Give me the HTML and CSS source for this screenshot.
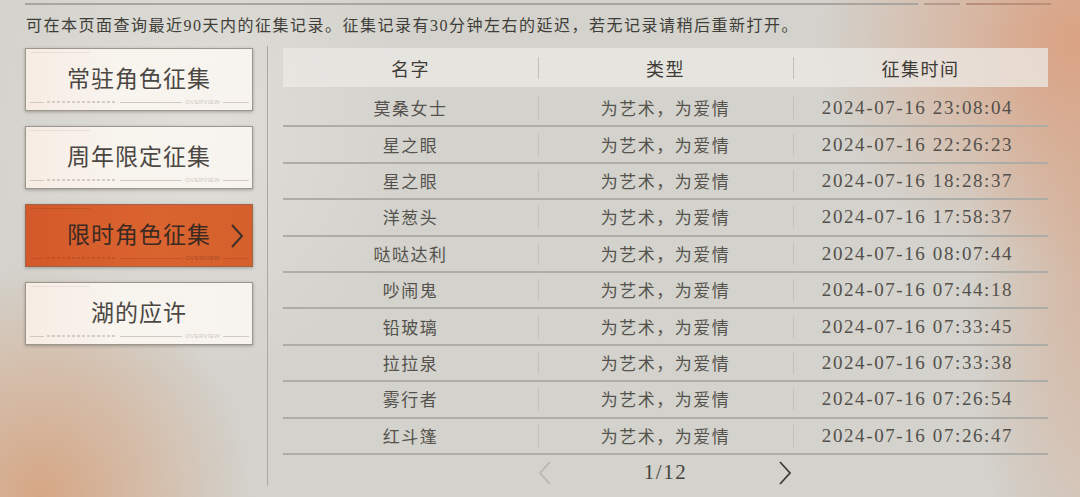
FILE: index.html
```html
<!DOCTYPE html>
<html lang="zh-CN">
<head>
<meta charset="utf-8">
<title>征集记录</title>
<link rel="stylesheet" href="styles.css">
</head>
<body>
<div class="page">
  <div class="topbar">
    <span class="tl tl-main"></span>
    <span class="tl tl-s1"></span>
    <span class="tl tl-s2"></span>
  </div>
  <p class="notice">可在本页面查询最近90天内的征集记录。征集记录有30分钟左右的延迟，若无记录请稍后重新打开。</p>
  <div class="main">
    <nav class="side">
      <div class="card">
        <span class="card-top"></span>
        <span class="card-label">常驻角色征集</span>
        <span class="deco"><i class="dl short"></i><i class="dots"></i><i class="dl long"></i><b>OVERVIEW</b><i class="dl end"></i></span>
      </div>
      <div class="card">
        <span class="card-top"></span>
        <span class="card-label">周年限定征集</span>
        <span class="deco"><i class="dl short"></i><i class="dots"></i><i class="dl long"></i><b>OVERVIEW</b><i class="dl end"></i></span>
      </div>
      <div class="card active">
        <span class="card-top"></span>
        <span class="card-label">限时角色征集</span>
        <span class="deco"><i class="dl short"></i><i class="dots"></i><i class="dl long"></i><b>OVERVIEW</b><i class="dl end"></i></span>
        <svg class="chev" viewBox="0 0 14 26" width="14" height="26"><path d="M2 2 L12 13 L2 24" fill="none" stroke="#3d3029" stroke-width="2"/></svg>
      </div>
      <div class="card">
        <span class="card-top"></span>
        <span class="card-label">湖的应许</span>
        <span class="deco"><i class="dl short"></i><i class="dots"></i><i class="dl long"></i><b>OVERVIEW</b><i class="dl end"></i></span>
      </div>
    </nav>
    <div class="vdiv"></div>
    <section class="records">
      <div class="thead">
        <div class="th">名字</div>
        <div class="th">类型</div>
        <div class="th">征集时间</div>
      </div>
      <div class="rows">
        <div class="row"><span>莫桑女士</span><span>为艺术，为爱情</span><span class="t">2024-07-16 23:08:04</span></div>
        <div class="row"><span>星之眼</span><span>为艺术，为爱情</span><span class="t">2024-07-16 22:26:23</span></div>
        <div class="row"><span>星之眼</span><span>为艺术，为爱情</span><span class="t">2024-07-16 18:28:37</span></div>
        <div class="row"><span>洋葱头</span><span>为艺术，为爱情</span><span class="t">2024-07-16 17:58:37</span></div>
        <div class="row"><span>哒哒达利</span><span>为艺术，为爱情</span><span class="t">2024-07-16 08:07:44</span></div>
        <div class="row"><span>吵闹鬼</span><span>为艺术，为爱情</span><span class="t">2024-07-16 07:44:18</span></div>
        <div class="row"><span>铅玻璃</span><span>为艺术，为爱情</span><span class="t">2024-07-16 07:33:45</span></div>
        <div class="row"><span>拉拉泉</span><span>为艺术，为爱情</span><span class="t">2024-07-16 07:33:38</span></div>
        <div class="row"><span>雾行者</span><span>为艺术，为爱情</span><span class="t">2024-07-16 07:26:54</span></div>
        <div class="row"><span>红斗篷</span><span>为艺术，为爱情</span><span class="t">2024-07-16 07:26:47</span></div>
      </div>
      <div class="pager">
        <svg class="pg prev" viewBox="0 0 14 26" width="14" height="26"><path d="M12 2 L2 13 L12 24" fill="none" stroke="#b9b6b0" stroke-width="1.8"/></svg>
        <span class="pnum">1/12</span>
        <svg class="pg next" viewBox="0 0 14 26" width="14" height="26"><path d="M2 2 L12 13 L2 24" fill="none" stroke="#3f3c38" stroke-width="1.8"/></svg>
      </div>
    </section>
  </div>
</div>
</body>
</html>
```

FILE: styles.css
```css
html, body {
  margin: 0;
  padding: 0;
}
body {
  width: 1080px;
  height: 497px;
  overflow: hidden;
  font-family: "Liberation Serif", "Noto Sans CJK SC", serif;
  color: #55524d;
}
.page {
  width: 1080px;
  height: 497px;
  box-sizing: border-box;
  background:
    radial-gradient(ellipse 260px 230px at 1080px 40px, rgba(218,160,128,0.95), rgba(218,160,128,0) 100%),
    radial-gradient(ellipse 120px 420px at 1090px 250px, rgba(214,168,140,0.7), rgba(214,168,140,0) 100%),
    radial-gradient(ellipse 210px 230px at 40px 497px, rgba(214,164,128,0.95), rgba(214,164,128,0) 100%),
    radial-gradient(ellipse 220px 260px at 200px 130px, rgba(236,234,228,0.5), rgba(236,234,228,0) 100%),
    #d3d2cc;
  display: flex;
  flex-direction: column;
}
.topbar {
  display: flex;
  gap: 6px;
  height: 2px;
  margin: 3px 0 0 25px;
}
.tl {
  display: block;
  height: 2px;
  background: #a9a59e;
}
.tl-main { width: 893px; }
.tl-s1 { width: 36px; background: #b49a8c; }
.tl-s2 { width: 85px; background: #ba8f7a; }
.notice {
  margin: 11px 0 0 26px;
  height: 20px;
  line-height: 20px;
  font-size: 16px;
  letter-spacing: 1.5px;
  color: #413e3a;
  white-space: nowrap;
}
.main {
  display: flex;
  margin-top: 10px;
  flex: 1;
}
.side {
  width: 228px;
  margin-left: 25px;
  padding-top: 2px;
  display: flex;
  flex-direction: column;
  gap: 15px;
}
.card {
  position: relative;
  height: 63px;
  box-sizing: border-box;
  border: 1px solid #9b968e;
  box-shadow: 0 1px 3px rgba(60,50,40,0.35);
  background: linear-gradient(90deg, #f7ece4 0%, #f8f4ee 40%, #f7f4ef 100%);
  display: flex;
  flex-direction: column;
  align-items: stretch;
}
.card-top {
  display: block;
  height: 1px;
  width: 60px;
  margin: 3px 0 0 4px;
  background: rgba(160,150,140,0.18);
}
.card-label {
  flex: 1;
  display: flex;
  align-items: center;
  justify-content: center;
  font-family: "Noto Sans CJK SC", sans-serif;
  font-size: 23px;
  letter-spacing: 1px;
  color: #4b4743;
  padding-top: 2px;
}
.deco {
  display: flex;
  align-items: center;
  height: 6px;
  margin: 0 3px 5px 4px;
  gap: 3px;
}
.deco i {
  display: block;
  height: 1px;
  background: #d0c9c1;
}
.deco .short { width: 14px; }
.deco .dots {
  width: 70px;
  height: 2px;
  background: repeating-linear-gradient(90deg, #d6ccc3 0 3px, transparent 3px 5px);
}
.deco .long { flex: 1; }
.deco .end { width: 26px; }
.deco b {
  font-family: "Liberation Sans", sans-serif;
  font-weight: normal;
  font-size: 6px;
  letter-spacing: 0.3px;
  color: #cfc8c0;
}
.card.active {
  background: linear-gradient(90deg, #d4592a 0%, #da6430 60%, #d6602c 100%);
  border-color: #a0644a;
}
.card.active .card-label {
  color: #3a2a22;
}
.card.active .card-top { background: rgba(120,50,20,0.2); }
.card.active .deco i { background: rgba(170,70,30,0.45); }
.card.active .deco .dots { background: repeating-linear-gradient(90deg, rgba(170,70,30,0.45) 0 3px, transparent 3px 5px); }
.card.active .deco b { color: rgba(160,70,35,0.9); }
.chev {
  position: absolute;
  right: 8px;
  top: 18px;
}
.vdiv {
  width: 1px;
  margin-left: 14px;
  margin-right: 15px;
  height: 440px;
  background: #aaa8a2;
}
.records {
  width: 765px;
  display: flex;
  flex-direction: column;
  padding-top: 2px;
}
.thead {
  display: grid;
  grid-template-columns: repeat(3, 1fr);
  height: 39px;
  background: rgba(236,234,229,0.75);
  align-items: center;
}
.th {
  text-align: center;
  font-family: "Noto Sans CJK SC", sans-serif;
  font-size: 18px;
  letter-spacing: 1.5px;
  color: #3e3b37;
  position: relative;
}
.th + .th::before, .row span + span::before {
  content: "";
  position: absolute;
  left: 0;
  top: 50%;
  width: 1px;
  height: 22px;
  margin-top: -11px;
  background: #c2c0ba;
}
.rows {
  display: flex;
  flex-direction: column;
  margin-top: 4px;
}
.row {
  display: grid;
  grid-template-columns: repeat(3, 1fr);
  height: 36.4px;
  box-sizing: border-box;
  border-bottom: 2px solid #aeaca6;
  align-items: center;
}
.row span {
  position: relative;
  text-align: center;
  font-family: "Noto Sans CJK SC", sans-serif;
  font-size: 17px;
  letter-spacing: 1.5px;
  color: #55524d;
  line-height: 34px;
}
.row span.t {
  font-family: "Liberation Serif", serif;
  font-size: 19px;
  letter-spacing: 1.6px;
  color: #53504b;
  padding-right: 6px;
}
.pager {
  display: grid;
  grid-template-columns: repeat(3, 1fr);
  height: 30px;
  align-items: center;
  padding-top: 3px;
}
.pager .pg, .pager .pnum { grid-row: 1; }
.pager .prev { grid-column: 2; justify-self: start; }
.pager .next { grid-column: 2; justify-self: end; margin-right: 1px; }
.pnum {
  grid-column: 2;
  justify-self: center;
  font-family: "Liberation Serif", serif;
  font-size: 21px;
  letter-spacing: 1.5px;
  color: #46433f;
}
```
